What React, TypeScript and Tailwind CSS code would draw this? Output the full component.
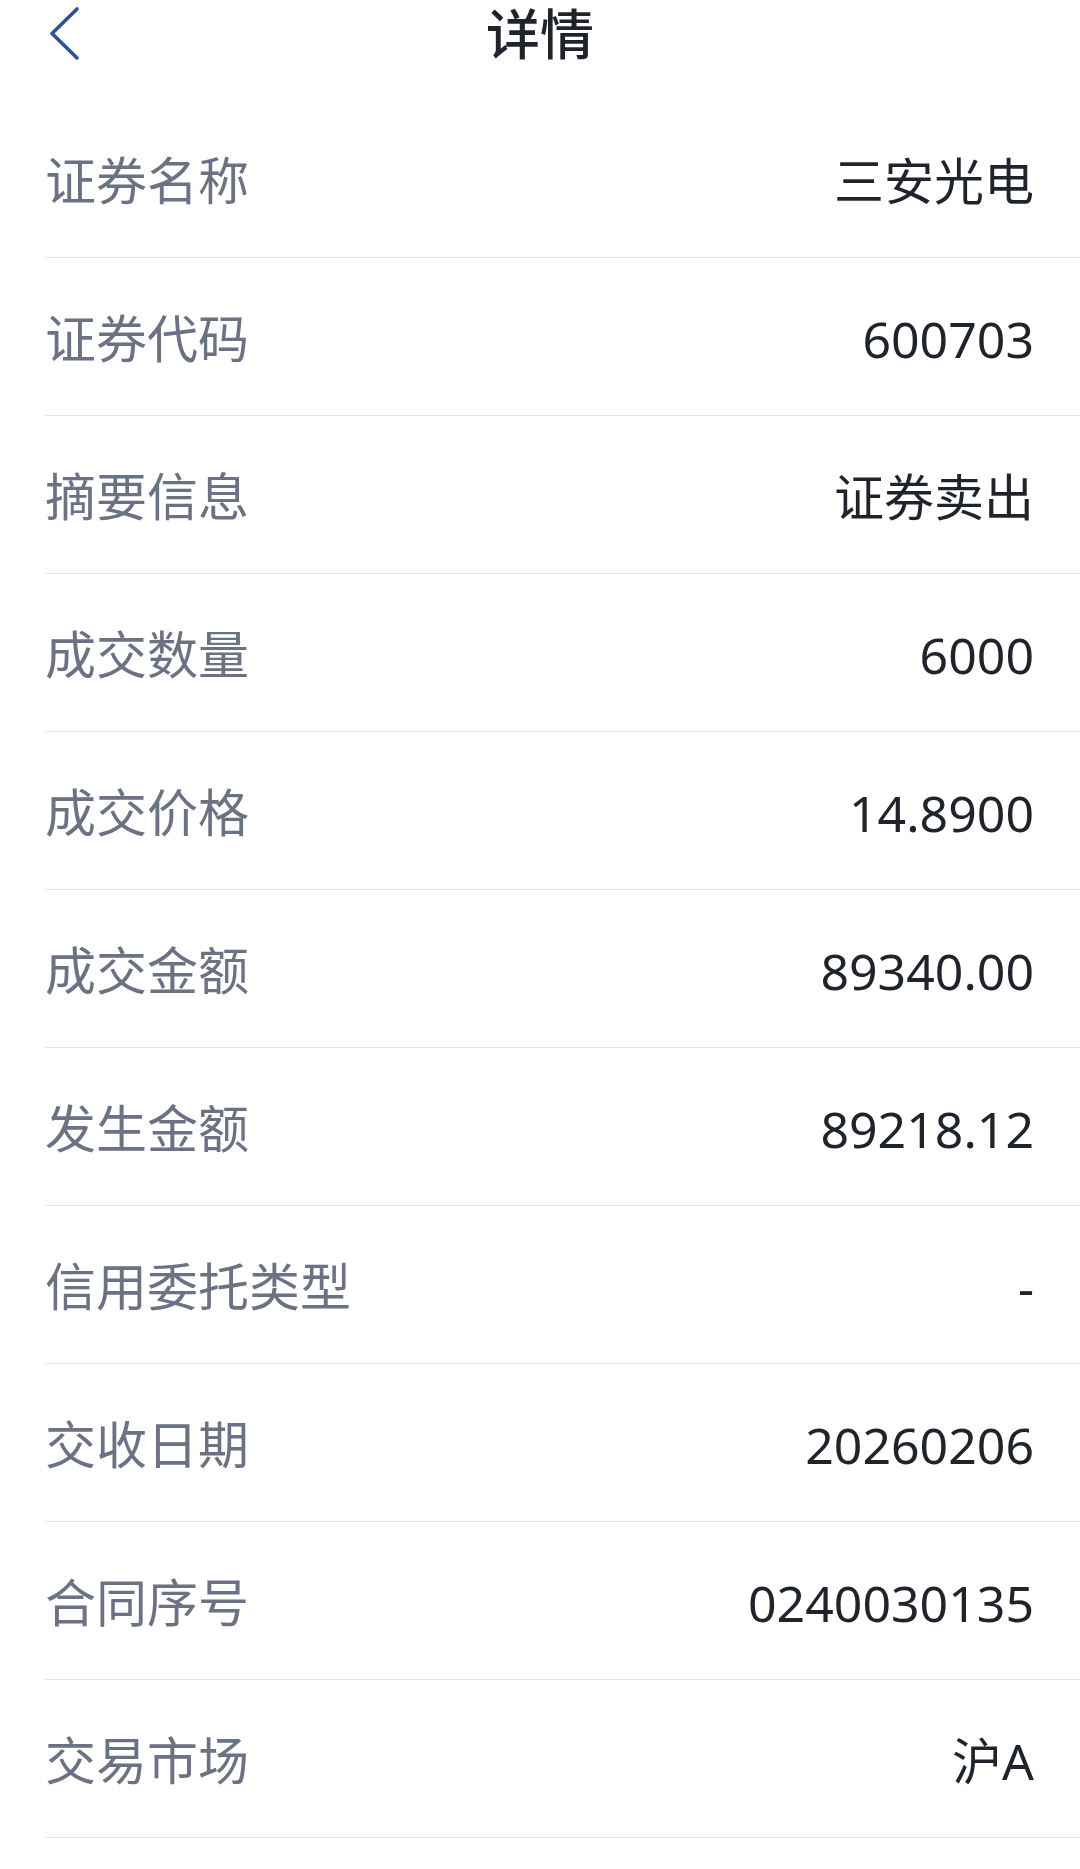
const rows: [string, string][] = [
  ["证券名称", "三安光电"],
  ["证券代码", "600703"],
  ["摘要信息", "证券卖出"],
  ["成交数量", "6000"],
  ["成交价格", "14.8900"],
  ["成交金额", "89340.00"],
  ["发生金额", "89218.12"],
  ["信用委托类型", "-"],
  ["交收日期", "20260206"],
  ["合同序号", "0240030135"],
  ["交易市场", "沪A"],
];

export default function App() {
  return (
    <main
      className="min-h-[1869px] w-[1080px] bg-white"
      style={{ fontFamily: '"Noto Sans CJK SC", "Noto Sans", sans-serif' }}
    >
      {/* header */}
      <header className="h-[100px] relative">
        <div className="h-[64px] flex items-center justify-center">
          <h1 className="text-[54px] leading-[64px] font-medium text-[#1f232c]">详情</h1>
        </div>
        <button className="absolute left-[44px] top-[4px] w-[40px] h-[60px]">
          <svg width="40" height="60" viewBox="0 0 40 60" fill="none">
            <polyline
              points="33,5 8,29.5 33,54"
              stroke="#2e5298"
              strokeWidth="3.6"
              strokeLinecap="round"
              strokeLinejoin="round"
            />
          </svg>
        </button>
      </header>

      {/* detail rows */}
      <section className="pl-[45px]">
        {rows.map(([label, value]) => (
          <div
            key={label}
            className="h-[158px] flex items-center justify-between border-b border-[#e4e4e6] pr-[46px]"
          >
            <span className="text-[51px] leading-[157px] text-[#6b7283]">{label}</span>
            <span
              className="pt-[5px] text-[50px] leading-[157px] text-[#1f232b] font-['Noto_Sans','Noto_Sans_CJK_SC',sans-serif]"
            >
              {value}
            </span>
          </div>
        ))}
      </section>
    </main>
  );
}
